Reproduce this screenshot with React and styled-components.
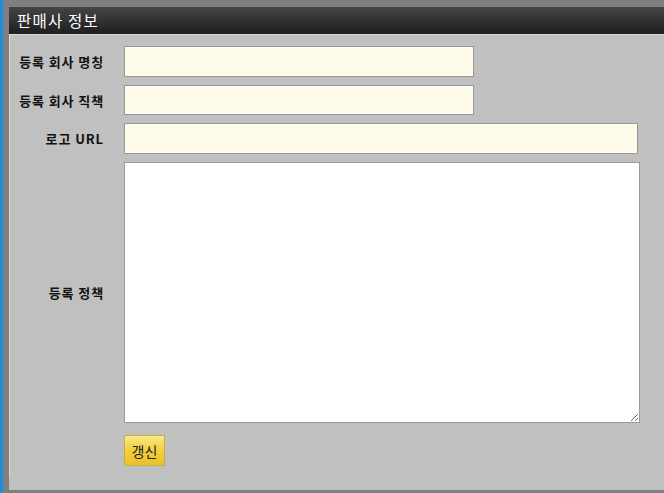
import React from "react";
import styled, { createGlobalStyle } from "styled-components";

const GlobalStyle = createGlobalStyle`
  html, body {
    margin: 0;
    padding: 0;
    height: 100%;
    background: #7f7f7f;
  }
  body {
    font-family: "Noto Sans CJK KR", "Noto Sans", sans-serif;
    overflow: hidden;
  }
`;

const Page = styled.div`
  display: flex;
  height: 493px;
  background: #7f7f7f;
`;

const SideStripe = styled.div`
  width: 3px;
  flex: none;
  background: #1b8fd9;
`;

const Main = styled.div`
  flex: 1;
  padding: 7px 0 3px 6px;
  display: flex;
  flex-direction: column;
`;

const Panel = styled.div`
  flex: 1;
  display: flex;
  flex-direction: column;
  background: #c0c0c0;
`;

const Header = styled.div`
  height: 27px;
  display: flex;
  align-items: center;
  padding-left: 8px;
  background: linear-gradient(#454545, #1e1e1e);
  border-bottom: 1px solid #dcdcd0;
  color: #fff;
  font-size: 15.5px;
  letter-spacing: 1.2px;
  line-height: 1;
`;

const Body = styled.div`
  border-left: 1px solid #dcdcd4;
  padding: 11px 0 10px 0;
`;

const Form = styled.div`
  display: grid;
  grid-template-columns: 93px auto;
  column-gap: 21px;
  row-gap: 8px;
  align-items: center;
`;

const Label = styled.label`
  text-align: right;
  font-size: 13px;
  font-weight: bold;
  letter-spacing: 0.9px;
  margin-right: -1px;
  color: #111;
  white-space: nowrap;
`;

const Field = styled.input`
  box-sizing: border-box;
  width: ${(p) => p.$w}px;
  height: ${(p) => p.$h || 31}px;
  margin: 0;
  border: 1px solid #999;
  background: #fffbea;
  font-size: 13px;
  padding: 0 4px;
  outline: none;
`;

const Area = styled.textarea`
  box-sizing: border-box;
  display: block;
  width: 516px;
  height: 261px;
  margin: 0;
  border: 1px solid #999;
  background: #fff;
  resize: both;
  outline: none;
`;

const Button = styled.button`
  box-sizing: border-box;
  grid-column: 2;
  justify-self: start;
  margin-top: 4px;
  width: 41px;
  height: 31px;
  padding: 0;
  border: 1px solid #c9ad45;
  background: linear-gradient(#fbe88a, #f1d13e 45%, #e9c12a);
  font-family: "Noto Sans CJK KR", sans-serif;
  font-size: 14px;
  color: #222;
`;

export default function App() {
  return (
    <>
      <GlobalStyle />
      <Page>
        <SideStripe />
        <Main>
          <Panel>
            <Header>판매사 정보</Header>
            <Body>
              <Form>
                <Label>등록 회사 명칭</Label>
                <Field $w={350} $h={31} />
                <Label>등록 회사 직책</Label>
                <Field $w={350} $h={30} />
                <Label>로고 URL</Label>
                <Field $w={514} $h={31} />
                <Label>등록 정책</Label>
                <Area />
                <Button>갱신</Button>
              </Form>
            </Body>
          </Panel>
        </Main>
      </Page>
    </>
  );
}
